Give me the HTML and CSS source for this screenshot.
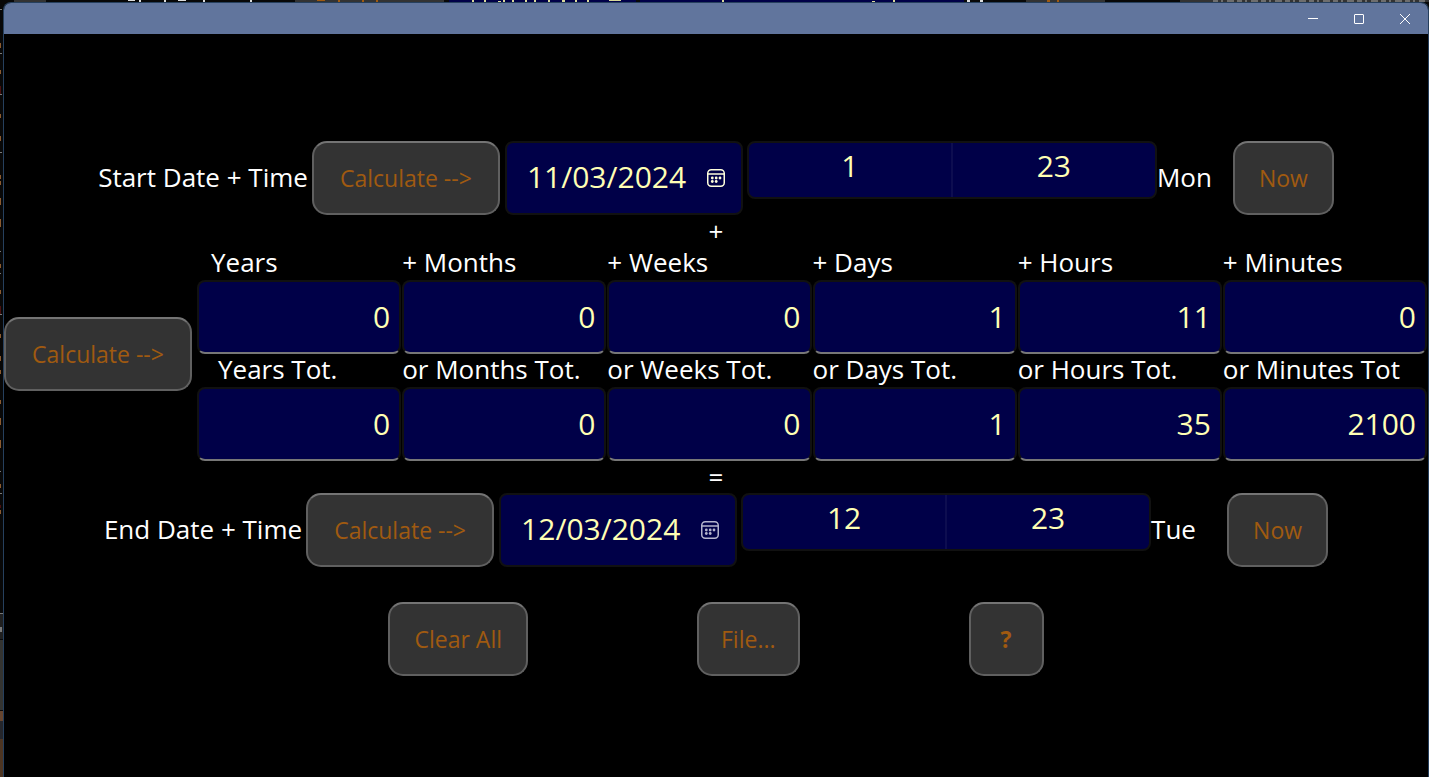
FILE: index.html
```html
<!DOCTYPE html>
<html lang="en">
<head>
<meta charset="utf-8">
<title>Date and time calculator</title>
<link rel="stylesheet" href="styles.css">
</head>
<body>
<svg class="edge" aria-hidden="true">
  <g fill="#7a7a7a"><path d="M0 9h2v1h-2zM0 53h2v1h-2zM0 94h2v1h-2zM0 152h2v1h-2zM0 251h1v1h-1zM0 273h1v1h-1zM0 314h2v1h-2zM0 471h1v1h-1zM0 493h2v1h-2z"/></g>
  <g fill="#8a5a30"><path d="M0 43h1v5h-1zM0 70h1v4h-1zM0 114h1v4h-1zM0 136h1v5h-1zM0 175h1v4h-1zM0 181h1v4h-1zM0 198h1v7h-1zM0 219h1v8h-1zM0 264h1v4h-1zM0 290h1v4h-1zM0 334h1v4h-1zM0 356h1v5h-1zM0 370h1v4h-1zM0 400h1v4h-1zM0 418h1v7h-1zM0 440h1v8h-1zM0 484h1v4h-1zM0 510h1v4h-1z"/></g>
  <g fill="#4a1010"><path d="M0 86h1v8h-1zM0 306h1v8h-1zM0 505h1v3h-1z"/></g>
  <path fill="#202020" d="M0 613h3v26h-3z"/>
  <path fill="#777" d="M0 613h3v1h-3zM0 627h2v5h-2z"/>
  <path fill="#343431" d="M0 640h3v70h-3z"/>
  <path fill="#66452f" d="M0 711h3v10h-3z"/>
  <path fill="#25262b" d="M0 721h3v18h-3z"/>
  <path fill="#4d3522" d="M0 739h3v38h-3z"/>
  <path fill="#333" d="M14 0h32v2h-32zM295 0h149v2h-149zM1026 0h79v2h-79zM1180 0h249v2h-249z"/>
  <path fill="#000048" d="M449 0h187v2h-187zM640 0h324v2h-324z"/>
  <path fill="#ddd" d="M128 0h7v1h-7zM139 0h2v2h-2zM164 0h2v2h-2zM178 0h8v1h-8zM203 0h2v2h-2zM250 0h2v2h-2zM967 0h3v2h-3zM980 0h3v2h-3z"/>
  <path fill="#a05a10" d="M317 0h8v1h-8zM338 0h2v2h-2zM362 0h2v2h-2zM376 0h2v2h-2zM1047 0h3v2h-3zM1057 0h2v2h-2z"/>
  <path fill="#d9d99a" d="M472 0h2v2h-2zM484 0h2v2h-2zM498 1h3v1h-3zM503 0h2v2h-2zM512 0h2v2h-2zM525 0h2v2h-2zM534 0h2v2h-2zM548 0h2v2h-2zM562 0h3v2h-3zM575 0h2v2h-2zM587 0h2v2h-2zM609 0h12v1h-12zM722 0h2v2h-2zM872 1h3v1h-3zM893 0h2v2h-2z"/>
  <path stroke="#aaa" stroke-dasharray="5 3 2 4 7 3" d="M1213 1h212"/>
</svg>
<div class="window">
  <header class="titlebar">
    <button class="caption" aria-label="Minimize"><svg width="10" height="10" viewBox="0 0 10 10"><path d="M0 4.500h10"/></svg></button>
    <button class="caption" aria-label="Maximize"><svg width="10" height="10" viewBox="0 0 10 10"><rect x=".5" y=".5" width="9" height="9" rx=".5"/></svg></button>
    <button class="caption" aria-label="Close"><svg width="10" height="10" viewBox="0 0 10 10"><path d="M0 0l10 10M10 0L0 10"/></svg></button>
  </header>
  <main class="content">
    <section class="moment">
      <label class="moment-label" for="start-date">Start Date + Time</label>
      <button class="btn calculate">Calculate --&gt;</button>
      <div class="date">
        <input id="start-date" type="text" value="11/03/2024">
        <button class="picker lit" aria-label="Choose start date"><svg width="18" height="18" viewBox="0 0 18 18"><rect x=".75" y=".75" width="16.500" height="16.500" rx="3.500"/><path d="M1 5h16"/><g class="dots"><circle cx="5.300" cy="9" r="1.400"/><circle cx="9.200" cy="9" r="1.400"/><circle cx="13" cy="9" r="1.400"/><circle cx="5.300" cy="12.500" r="1.400"/><circle cx="9.200" cy="12.500" r="1.400"/></g></svg></button>
      </div>
      <div class="time">
        <input type="text" aria-label="Start hour" value="1">
        <input type="text" aria-label="Start minute" value="23">
      </div>
      <output class="weekday">Mon</output>
      <button class="btn">Now</button>
    </section>
    <p class="operator">+</p>
    <section class="duration">
      <button class="btn calculate">Calculate --&gt;</button>
      <div class="units">
        <div class="unit indent"><label for="y">Years</label><input id="y" type="text" value="0"></div>
        <div class="unit"><label for="mo">+ Months</label><input id="mo" type="text" value="0"></div>
        <div class="unit"><label for="w">+ Weeks</label><input id="w" type="text" value="0"></div>
        <div class="unit"><label for="d">+ Days</label><input id="d" type="text" value="1"></div>
        <div class="unit"><label for="h">+ Hours</label><input id="h" type="text" value="11"></div>
        <div class="unit"><label for="mi">+ Minutes</label><input id="mi" type="text" value="0"></div>
        <div class="unit indent-more"><label for="yt">Years Tot.</label><input id="yt" type="text" value="0"></div>
        <div class="unit"><label for="mot">or Months Tot.</label><input id="mot" type="text" value="0"></div>
        <div class="unit"><label for="wt">or Weeks Tot.</label><input id="wt" type="text" value="0"></div>
        <div class="unit"><label for="dt">or Days Tot.</label><input id="dt" type="text" value="1"></div>
        <div class="unit"><label for="ht">or Hours Tot.</label><input id="ht" type="text" value="35"></div>
        <div class="unit"><label for="mit">or Minutes Tot</label><input id="mit" type="text" value="2100"></div>
      </div>
    </section>
    <p class="operator">=</p>
    <section class="moment">
      <label class="moment-label" for="end-date">End Date + Time</label>
      <button class="btn calculate">Calculate --&gt;</button>
      <div class="date">
        <input id="end-date" type="text" value="12/03/2024">
        <button class="picker" aria-label="Choose end date"><svg width="18" height="18" viewBox="0 0 18 18"><rect x=".75" y=".75" width="16.500" height="16.500" rx="3.500"/><path d="M1 5h16"/><g class="dots"><circle cx="5.300" cy="9" r="1.400"/><circle cx="9.200" cy="9" r="1.400"/><circle cx="13" cy="9" r="1.400"/><circle cx="5.300" cy="12.500" r="1.400"/><circle cx="9.200" cy="12.500" r="1.400"/></g></svg></button>
      </div>
      <div class="time">
        <input type="text" aria-label="End hour" value="12">
        <input type="text" aria-label="End minute" value="23">
      </div>
      <output class="weekday">Tue</output>
      <button class="btn">Now</button>
    </section>
    <footer class="actions">
      <button class="btn">Clear All</button>
      <button class="btn file">File...</button>
      <button class="btn strong">?</button>
    </footer>
  </main>
</div>
</body>
</html>
```
FILE: styles.css
```css
* { box-sizing: border-box; }

body {
  display: flex;
  min-height: 100vh;
  margin: 0;
  padding: 2px 0 0 3px;
  background: #080808;
  color: #fff;
  font: 26px/32px "Open Sans", "Noto Sans", sans-serif;
}

button, input { font: inherit; margin: 0; }

/* Sliver of the desktop behind the window */
.edge {
  position: absolute;
  top: 0;
  left: 0;
  width: 100%;
  height: 100%;
}

.window {
  position: relative;
  flex: 1;
  min-width: 0;
  overflow: hidden;
  border: 1px solid #26405e;
  border-bottom: 0;
  border-radius: 8px 8px 0 0;
  background: #000;
}

.titlebar {
  display: flex;
  justify-content: flex-end;
  height: 31px;
  background: #61759d;
}

.caption {
  display: flex;
  align-items: center;
  justify-content: center;
  width: 46px;
  padding: 0;
  border: 0;
  background: none;
}

.caption svg { fill: none; stroke: #fff; }

.content { padding-top: 107px; }

.moment {
  display: flex;
  align-items: center;
  justify-content: center;
}

.moment-label { margin-right: 4px; padding-bottom: 2px; white-space: nowrap; }

.btn {
  flex: none;
  height: 74px;
  padding: 0 24px;
  border: 2px solid #606060;
  border-top-color: #747474;
  border-radius: 15px;
  background: #333;
  color: #a05a10;
  font-size: 23px;
  white-space: nowrap;
}

.calculate { min-width: 188px; }
.file { padding: 0 22px; }
.strong { padding: 0 30px; font-weight: 700; }

.date {
  display: flex;
  align-items: center;
  width: 238px;
  height: 74px;
  margin: 0 4px 0 5px;
  padding: 0 16px 0 20px;
  border: 2px solid #111;
  border-radius: 8px;
  background: #000048;
}

.date input {
  flex: 1;
  min-width: 0;
  height: 60px;
  padding: 0 0 4px;
  border: 0;
  background: none;
  color: #ffffb4;
  font-size: 30px;
}

.picker {
  display: flex;
  padding: 0;
  border: 0;
  background: none;
  color: #b4b4cd;
}

.lit { color: #ffffdc; }
.picker svg { fill: none; stroke: currentColor; stroke-width: 1.5; }
.picker .dots { fill: currentColor; stroke: none; }

.time {
  display: flex;
  align-self: flex-start;
  width: 410px;
  height: 58px;
  overflow: hidden;
  border: 2px solid #111;
  border-radius: 8px;
  background: #000048;
}

.time input {
  flex: 1;
  min-width: 0;
  padding: 0 0 8px;
  border: 0;
  background: none;
  color: #ffffb4;
  font-size: 30px;
  text-align: center;
}

.time input + input { border-left: 2px solid #0d0d50; }

.weekday { width: 76px; padding-bottom: 2px; }

.operator { margin: 0; line-height: 32px; text-align: center; }

.duration { display: flex; align-items: center; gap: 5px; }

.units {
  display: grid;
  flex: 1;
  grid-template-columns: repeat(6, minmax(0, 1fr));
  column-gap: 1px;
  margin-right: 1px;
}

.unit { display: flex; flex-direction: column; }
.unit label { height: 33px; line-height: 30px; white-space: nowrap; }
.indent label { padding-left: 14px; }
.indent-more label { padding-left: 21px; }

.unit input {
  width: 100%;
  height: 74px;
  padding: 0 9px 2px 8px;
  border: 2px solid #111;
  border-bottom-color: #777;
  border-radius: 8px;
  background: #000048;
  color: #ffffb4;
  font-size: 30px;
  text-align: right;
}

.actions {
  display: flex;
  justify-content: center;
  gap: 169px;
  padding: 35px 0;
}
```
